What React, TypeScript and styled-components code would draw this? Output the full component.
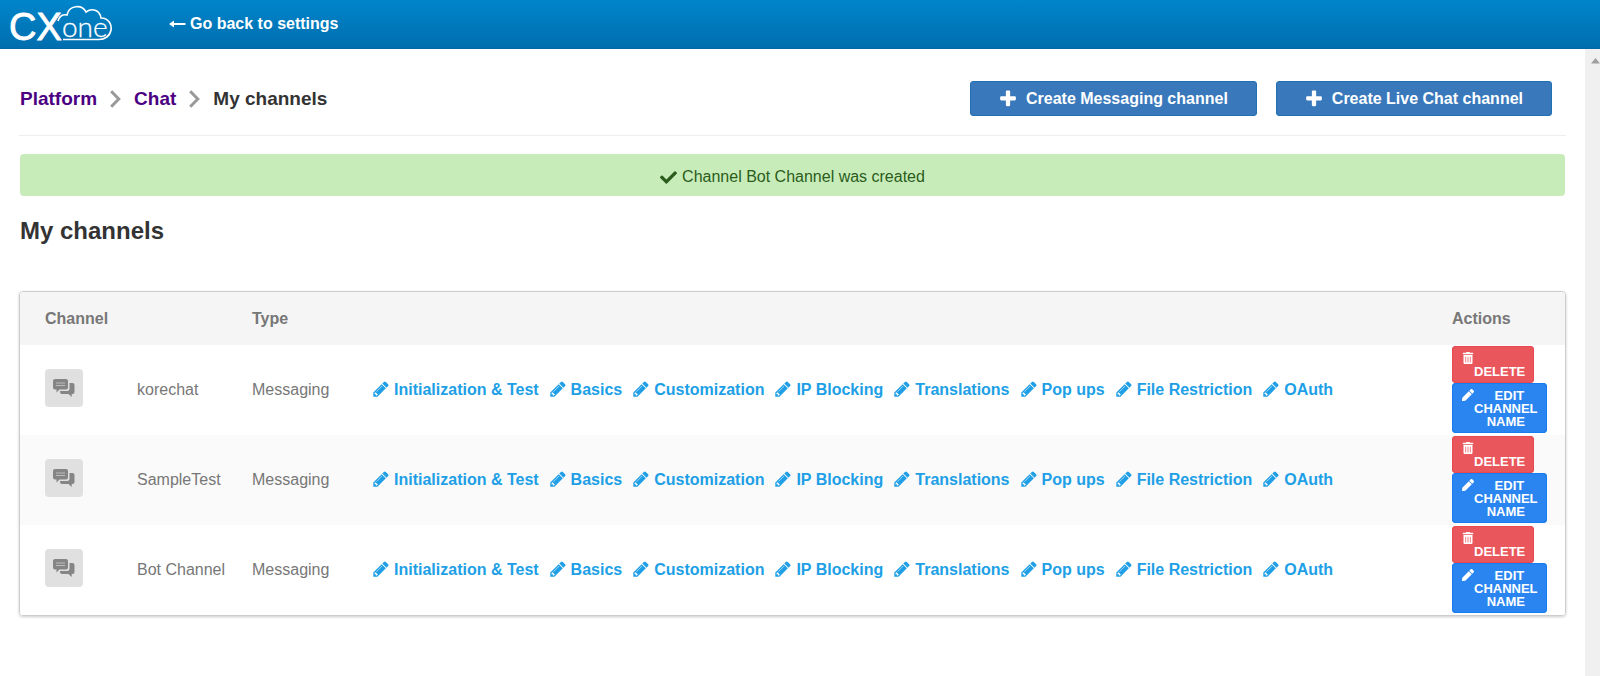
import React from "react";
import styled, { createGlobalStyle } from "styled-components";
import { FaCheck, FaPen, FaTrashAlt } from "react-icons/fa";

const GlobalStyle = createGlobalStyle`
  *, *::before, *::after { box-sizing: border-box; }
  body {
    margin: 0;
    background: #fff;
    color: #777;
    font-family: "Liberation Sans", Arial, sans-serif;
    font-size: 16px;
    line-height: 20px;
  }
`;

const Page = styled.div`
  display: flex;
  flex-direction: column;
  min-height: 100vh;
`;

const TopBar = styled.header`
  display: flex;
  align-items: center;
  height: 49px;
  padding-left: 9px;
  gap: 56px;
  background: linear-gradient(#0085cb, #006eae);
  border-bottom: 1px solid #0068a8;
`;

const Logo = styled.svg`
  width: 104px;
  height: 48px;
  overflow: visible;
  fill: #fff;
`;

const BackLink = styled.a`
  display: flex;
  align-items: center;
  gap: 4px;
  color: #fff;
  font-weight: bold;
  text-decoration: none;
`;

const Body = styled.div`
  display: flex;
  flex: 1;
`;

const Content = styled.main`
  flex: 1;
  min-width: 0;
  padding: 32px 19px 32px 19px;
`;

const ScrollTrack = styled.div`
  width: 15px;
  display: flex;
  justify-content: flex-end;
  align-items: flex-start;
  padding-top: 9px;
  background: #f0f0f0;
`;

const PageHead = styled.div`
  display: flex;
  align-items: center;
  justify-content: space-between;
  padding: 0 14px 19px 1px;
  border-bottom: 1px solid #eee;
`;

const Breadcrumb = styled.nav`
  display: flex;
  align-items: center;
  gap: 13px;
  font-size: 19px;
  font-weight: bold;
  color: #333;
`;

const Crumb = styled.a`
  color: #4b0082;
  text-decoration: none;
`;

const ButtonGroup = styled.div`
  display: flex;
  gap: 19px;
`;

const CreateButton = styled.button`
  display: flex;
  align-items: center;
  gap: 8px;
  height: 35px;
  padding: 0 28px 0 27px;
  border: 1px solid #2270b4;
  border-radius: 3px;
  background: #3878bb;
  color: #fff;
  font: bold 16px/20px "Liberation Sans", Arial, sans-serif;
`;

const Alert = styled.div`
  display: flex;
  align-items: center;
  justify-content: center;
  gap: 5px;
  height: 42px;
  margin: 18px 1px 0;
  padding-top: 4px;
  border-radius: 4px;
  background: #c8ecb9;
  color: #2a5c1b;
`;

const Title = styled.h1`
  margin: 20px 1px 46px;
  font-size: 24px;
  line-height: 29px;
  color: #333;
`;

const Panel = styled.section`
  border: 1px solid #ccc;
  border-radius: 4px;
  box-shadow: 0 1px 3px rgba(0, 0, 0, 0.2);
  overflow: hidden;
`;

const Table = styled.table`
  width: 100%;
  table-layout: fixed;
  border-collapse: collapse;
`;

const Col = styled.col<{ $width?: number }>`
  width: ${(p) => (p.$width ? `${p.$width}px` : "auto")};
`;

const HeadCell = styled.th`
  height: 53px;
  padding: 0;
  background: #f5f5f5;
  text-align: left;
  &:first-child { padding-left: 25px; }
`;

const Row = styled.tr`
  height: 90px;
  background: #fff;
  &:nth-child(even) { background: #fafafa; }
`;

const Cell = styled.td`
  padding: 0;
  white-space: nowrap;
  &:first-child { padding-left: 25px; }
`;

const Avatar = styled.div`
  display: flex;
  align-items: center;
  justify-content: center;
  width: 38px;
  height: 38px;
  margin-bottom: 4px;
  border-radius: 4px;
  background: #e0e0e0;
`;

const LinkList = styled.div`
  display: flex;
  gap: 10px;
`;

const EditLink = styled.a`
  display: flex;
  align-items: flex-start;
  gap: 4px;
  color: #209fe6;
  font-weight: bold;
  text-decoration: none;
`;

const Actions = styled.div`
  display: flex;
  flex-direction: column;
  align-items: flex-start;
  margin-bottom: 2px;
`;

const ActionButton = styled.button<{ $tone: "danger" | "primary" }>`
  display: flex;
  align-items: flex-start;
  padding: 6px 9px 5px 10px;
  border: 0;
  border-radius: 4px;
  background: ${(p) => (p.$tone === "danger" ? "#e9565b" : "#2a85f0")};
  box-shadow: inset 0 0 0 1px ${(p) => (p.$tone === "danger" ? "#e64a50" : "#167cf0")};
  color: #fff;
  font: bold 13px/13px "Liberation Sans", Arial, sans-serif;
  text-align: center;
  text-transform: uppercase;
`;

const ArrowLeft = () => (
  <svg width="17" height="8" viewBox="0 0 17 8" fill="#fff" aria-hidden="true">
    <path d="M0 4 5 .5V3h11.5v2H5v2.5z" />
  </svg>
);

const Chevron = () => (
  <svg width="11" height="18" viewBox="0 0 11 18" fill="none" stroke="#999" strokeWidth="3" aria-hidden="true">
    <path d="M1.2 1.2 8.8 9l-7.6 7.8" />
  </svg>
);

const Plus = () => (
  <svg width="20" height="20" viewBox="0 0 1792 1792" fill="currentColor" aria-hidden="true">
    <path d="M1600 736v192q0 40-28 68t-68 28h-416v416q0 40-28 68t-68 28h-192q-40 0-68-28t-28-68v-416h-416q-40 0-68-28t-28-68v-192q0-40 28-68t68-28h416v-416q0-40 28-68t68-28h192q40 0 68 28t28 68v416h416q40 0 68 28t28 68z" />
  </svg>
);

const Pencil = () => (
  <svg width="18" height="18" viewBox="0 0 1792 1792" fill="currentColor" aria-hidden="true">
    <path d="M491 1536l91-91-235-235-91 91v107h128v128h107zm523-928q0-22-22-22-10 0-17 7l-542 542q-7 7-7 17 0 22 22 22 10 0 17-7l542-542q7-7 7-17zm-54-192l416 416-832 832h-416v-416zm683 96q0 53-37 90l-166 166-416-416 166-165q36-38 90-38 53 0 91 38l235 234q37 39 37 91z" />
  </svg>
);

const ChatIcon = () => (
  <svg width="22" height="18" viewBox="0 0 22 18" fill="#858585" aria-hidden="true">
    <path d="M2 0h11q2 0 2 2v6.500q0 2-2 2H6.500L3.500 13.500v-3H2q-2 0-2-2V2Q0 0 2 0z" />
    <path d="M3 4h9M3 6.500h9" stroke="#bbb" strokeWidth="1" />
    <path d="M16.500 4H19.500q2 0 2 2v7q0 2-2 2H18.700v3l-3.200-3H9q-2 0-2-2v-1h7q2.500 0 2.500-2.500z" />
  </svg>
);

const BrandLogo = () => (
  <Logo viewBox="0 0 104 48" role="img" aria-label="CXone">
    <text x="0" y="40" fontFamily="Liberation Sans, Arial, sans-serif" fontSize="38" stroke="#fff" strokeWidth="0.800">CX</text>
    <text x="53" y="37" fontFamily="Lato, sans-serif" fontWeight="300" fontSize="28" stroke="#fff" strokeWidth="0.300">one</text>
    <path
      d="M49 21C50 16 54 14 58 15C60 5 73 4 77 12C84 7 91 11 92 18C99 18 103 24 102 30C101 36 96 39.500 90 39.500H54"
      fill="none"
      stroke="#fff"
      strokeWidth="1.600"
    />
  </Logo>
);

const channels = ["korechat", "SampleTest", "Bot Channel"];

const editLinks = [
  "Initialization & Test",
  "Basics",
  "Customization",
  "IP Blocking",
  "Translations",
  "Pop ups",
  "File Restriction",
  "OAuth",
];

export default function App() {
  return (
    <Page>
      <GlobalStyle />
      <TopBar>
        <BrandLogo />
        <BackLink href="#settings">
          <ArrowLeft />
          Go back to settings
        </BackLink>
      </TopBar>
      <Body>
        <Content>
          <PageHead>
            <Breadcrumb aria-label="Breadcrumb">
              <Crumb href="#platform">Platform</Crumb>
              <Chevron />
              <Crumb href="#chat">Chat</Crumb>
              <Chevron />
              <span>My channels</span>
            </Breadcrumb>
            <ButtonGroup>
              <CreateButton type="button">
                <Plus />
                Create Messaging channel
              </CreateButton>
              <CreateButton type="button">
                <Plus />
                Create Live Chat channel
              </CreateButton>
            </ButtonGroup>
          </PageHead>
          <Alert role="status">
            <FaCheck size={17} />
            Channel Bot Channel was created
          </Alert>
          <Title>My channels</Title>
          <Panel>
            <Table>
              <colgroup>
                <Col $width={117} />
                <Col $width={115} />
                <Col $width={120} />
                <Col />
                <Col $width={113} />
              </colgroup>
              <thead>
                <tr>
                  <HeadCell colSpan={2}>Channel</HeadCell>
                  <HeadCell colSpan={2}>Type</HeadCell>
                  <HeadCell>Actions</HeadCell>
                </tr>
              </thead>
              <tbody>
                {channels.map((name) => (
                  <Row key={name}>
                    <Cell>
                      <Avatar>
                        <ChatIcon />
                      </Avatar>
                    </Cell>
                    <Cell>{name}</Cell>
                    <Cell>Messaging</Cell>
                    <Cell>
                      <LinkList>
                        {editLinks.map((label) => (
                          <EditLink key={label} href="#edit">
                            <Pencil />
                            {label}
                          </EditLink>
                        ))}
                      </LinkList>
                    </Cell>
                    <Cell>
                      <Actions>
                        <ActionButton type="button" $tone="danger">
                          <FaTrashAlt size={12} />
                          <span>
                            <br />
                            Delete
                          </span>
                        </ActionButton>
                        <ActionButton type="button" $tone="primary">
                          <FaPen size={12} />
                          <span>
                            {"\u00a0\u00a0"}Edit
                            <br />
                            channel
                            <br />
                            name
                          </span>
                        </ActionButton>
                      </Actions>
                    </Cell>
                  </Row>
                ))}
              </tbody>
            </Table>
          </Panel>
        </Content>
        <ScrollTrack aria-hidden="true">
          <svg width="9" height="6" viewBox="0 0 9 6" fill="#a0a0a0">
            <path d="M4.500 0 9 5.500H0z" />
          </svg>
        </ScrollTrack>
      </Body>
    </Page>
  );
}
